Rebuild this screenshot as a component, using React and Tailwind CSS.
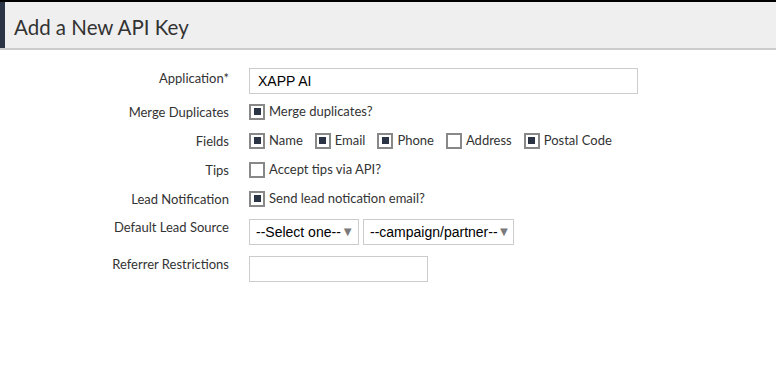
import React from 'react';

const Check = ({ checked, label }) => (
    <label className="flex items-center mr-[12px]">
        <span className="w-[16px] h-[16px] border-2 border-[#888888] bg-white flex items-center justify-center">
            {checked && <span className="w-[7px] h-[7px] bg-[#2b3445]" />}
        </span>
        <span className="ml-[4px] text-[13px] text-[#333333]">{label}</span>
    </label>
);

const Label = ({ children, className = '' }) => (
    <div className={`text-right text-[13px] leading-[16px] text-[#333333] ${className}`}>{children}</div>
);

const Select = ({ text, width }) => (
    <div
        className={`h-[26px] border border-[#cccccc] bg-white flex items-center justify-between pl-[6px] pr-[4px] whitespace-nowrap ${width}`}
        style={{ fontFamily: '"Liberation Sans", Arial, sans-serif' }}
    >
        <span className="text-[14px] text-black">{text}</span>
        <span className="text-[13px] text-[#7a7a7a]">▼</span>
    </div>
);

const App = () => {
    const fields = [
        { label: 'Name', checked: true },
        { label: 'Email', checked: true },
        { label: 'Phone', checked: true },
        { label: 'Address', checked: false },
        { label: 'Postal Code', checked: true },
    ];

    return (
        <div className="w-[776px] h-[377px] bg-white" style={{ fontFamily: 'Lato, "Noto Sans", sans-serif' }}>
            {/* header */}
            <div className="border-t-2 border-black">
                <div className="h-[48px] bg-[#efefef] border-b-2 border-[#cccccc] flex">
                    <div className="w-[5px] bg-[#2b3445]" />
                    <h1 className="ml-[9px] mt-[12px] text-[20.5px] leading-[26px] text-[#333333]">Add a New API Key</h1>
                </div>
            </div>

            <div className="grid grid-cols-[229px_1fr] gap-x-[20px] mt-[18px]">
                <Label className="pt-[2px]">Application*</Label>
                <div
                    className="w-[389px] h-[26px] border border-[#cccccc] flex items-center px-[8px] text-[14px] text-black"
                    style={{ fontFamily: '"Liberation Sans", Arial, sans-serif' }}
                >
                    XAPP AI
                </div>

                <div className="mt-[3px] h-[29px] flex items-center justify-end"><Label>Merge Duplicates</Label></div>
                <div className="mt-[3px] h-[29px] flex items-center"><Check checked label="Merge duplicates?" /></div>

                <div className="h-[29px] flex items-center justify-end"><Label>Fields</Label></div>
                <div className="h-[29px] flex items-center">
                    {fields.map(f => (
                        <Check key={f.label} checked={f.checked} label={f.label} />
                    ))}
                </div>

                <div className="h-[29px] flex items-center justify-end"><Label>Tips</Label></div>
                <div className="h-[29px] flex items-center"><Check label="Accept tips via API?" /></div>

                <div className="h-[29px] flex items-center justify-end"><Label>Lead Notification</Label></div>
                <div className="h-[29px] flex items-center"><Check checked label="Send lead notication email?" /></div>

                <Label className="mt-[6px]">Default Lead Source</Label>
                <div className="mt-[6px] flex gap-[4px]">
                    <Select text="--Select one--" width="w-[110px]" />
                    <Select text="--campaign/partner--" width="w-[151px]" />
                </div>

                <Label className="mt-[11px]">Referrer Restrictions</Label>
                <div className="mt-[11px] w-[179px] h-[26px] border border-[#cccccc]" />
            </div>
        </div>
    );
};

export default App;
